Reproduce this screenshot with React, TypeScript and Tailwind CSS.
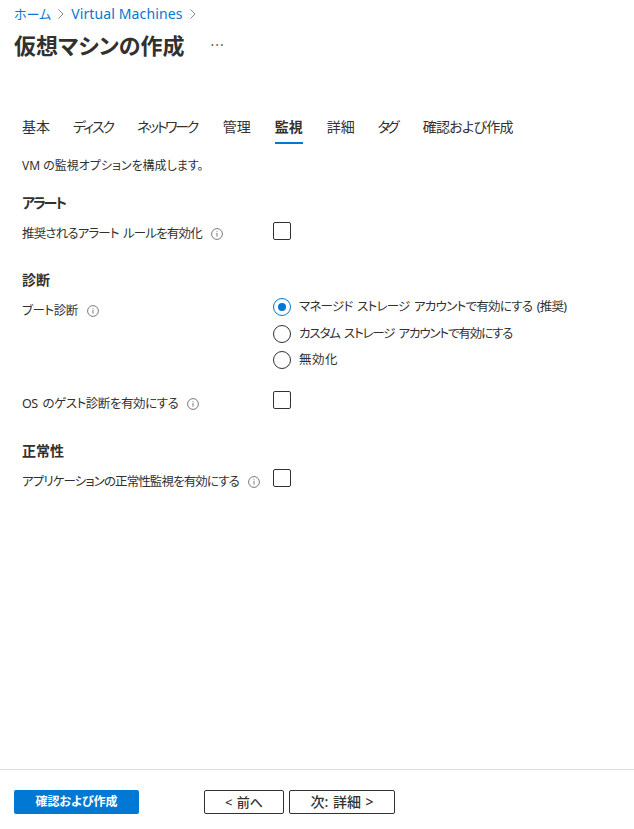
const tabs = [
  { label: "基本", className: "" },
  { label: "ディスク", className: "mr-[1px] tracking-[-2px]" },
  { label: "ネットワーク", className: "mr-[3px] tracking-[-2.4px]" },
  { label: "管理", className: "mr-[1px]" },
  { label: "監視", className: "mr-[1px] border-b-2 border-[#0078d4] font-semibold" },
  { label: "詳細", className: "" },
  { label: "タグ", className: "mr-[3px] tracking-[-3px]" },
  { label: "確認および作成", className: "tracking-[-0.7px]" },
];

function InfoIcon() {
  return (
    <svg width="12" height="12" viewBox="0 0 12 12" className="shrink-0">
      <circle cx="6" cy="6" r="5.4" fill="none" stroke="#7a7a7a" strokeWidth="1" />
      <rect x="5.5" y="5" width="1" height="3.6" fill="#7a7a7a" />
      <rect x="5.5" y="3.2" width="1" height="1" fill="#7a7a7a" />
    </svg>
  );
}

function Chevron() {
  return (
    <svg width="10" height="12" viewBox="0 0 10 12" className="shrink-0">
      <path d="M2.5 1.5l4.5 4.5-4.5 4.5" fill="none" stroke="#8a8886" strokeWidth="1" />
    </svg>
  );
}

function Checkbox() {
  return <div className="h-[18px] w-[18px] shrink-0 rounded-[2px] border border-[#323130] bg-white" />;
}

function Radio({ label, checked, className }: { label: string; checked?: boolean; className: string }) {
  return (
    <div className="flex h-[18px] items-center gap-2">
      {checked ? (
        <div className="flex h-[18px] w-[18px] items-center justify-center rounded-full border border-[#0078d4]">
          <div className="h-2 w-2 rounded-full bg-[#0078d4]" />
        </div>
      ) : (
        <div className="h-[18px] w-[18px] rounded-full border border-[#323130]" />
      )}
      <span className={`[word-spacing:2px] ${className}`}>{label}</span>
    </div>
  );
}

function Label({ text, className }: { text: string; className: string }) {
  return (
    <div className="flex items-center gap-[9px]">
      <span className={`[word-spacing:2px] ${className}`}>{text}</span>
      <InfoIcon />
    </div>
  );
}

export default function App() {
  return (
    <div className="flex h-[829px] flex-col overflow-hidden bg-white text-[12.5px] leading-[18px] text-[#323130] [font-family:'Noto_Sans','Noto_Sans_CJK_JP',sans-serif] [font-feature-settings:'palt']">
      <div className="flex-1 pl-[14px]">
        <div className="flex h-[18px] items-center gap-[5px] pt-[5px] box-content text-[14px] text-[#0078d4]">
          <span className="text-[13px]">ホーム</span>
          <Chevron />
          <span className="tracking-[0.12px]">Virtual Machines</span>
          <Chevron />
        </div>

        <div className="mt-[5px] flex h-[34px] items-center">
          <h1 className="text-[22px] font-semibold leading-[34px]">仮想マシンの作成</h1>
          <span className="ml-[26px] text-[14px] tracking-[1px] text-[#605e5c]">···</span>
        </div>

        <div className="mt-[49px] flex gap-[23px] pl-2 text-[14px]">
          {tabs.map((tab) => (
            <div key={tab.label} className={`h-[33px] pt-[7px] ${tab.className}`}>
              {tab.label}
            </div>
          ))}
        </div>

        <div className="pl-2">
          <p className="mt-[13px] text-[12px]">VM の監視オプションを構成します。</p>

          <h2 className="mt-[19px] text-[14px] font-semibold tracking-[-2px]">アラート</h2>
          <div className="mt-[10px] flex h-[18px] items-start">
            <div className="w-[251px] pt-[3px]">
              <Label text="推奨されるアラート ルールを有効化" className="tracking-[-0.85px]" />
            </div>
            <Checkbox />
          </div>

          <h2 className="mt-[31px] text-[14px] font-semibold">診断</h2>
          <div className="mt-[9px] flex">
            <div className="w-[251px] pt-[4px]">
              <Label text="ブート診断" className="tracking-[-0.4px]" />
            </div>
            <div className="flex flex-col gap-[8.5px]">
              <Radio checked label="マネージド ストレージ アカウントで有効にする (推奨)" className="tracking-[-0.75px]" />
              <Radio label="カスタム ストレージ アカウントで有効にする" className="tracking-[-1.15px]" />
              <Radio label="無効化" className="tracking-[0.5px]" />
            </div>
          </div>

          <div className="mt-[22px] flex">
            <div className="w-[251px] pt-[4px]">
              <Label text="OS のゲスト診断を有効にする" className="tracking-[-0.45px]" />
            </div>
            <Checkbox />
          </div>

          <h2 className="mt-[29px] text-[14px] font-semibold">正常性</h2>
          <div className="mt-[9px] flex">
            <div className="w-[251px] pt-[4px]">
              <Label text="アプリケーションの正常性監視を有効にする" className="tracking-[-0.9px]" />
            </div>
            <Checkbox />
          </div>
        </div>
      </div>

      <div className="flex h-[60px] items-start border-t border-[#e1dfdd] pl-[14px] pt-[20px]">
        <button className="h-[24px] w-[125px] rounded-[2px] bg-[#0078d4] text-[12px] font-semibold text-white">
          確認および作成
        </button>
        <button className="ml-[65px] h-[24px] w-[80px] rounded-[2px] border border-[#323130] text-[13px] font-medium [word-spacing:1px]">
          {"< 前へ"}
        </button>
        <button className="ml-[5px] h-[24px] w-[106px] rounded-[2px] border border-[#323130] text-[14px] font-medium [word-spacing:1px]">
          {"次: 詳細 >"}
        </button>
      </div>
    </div>
  );
}
